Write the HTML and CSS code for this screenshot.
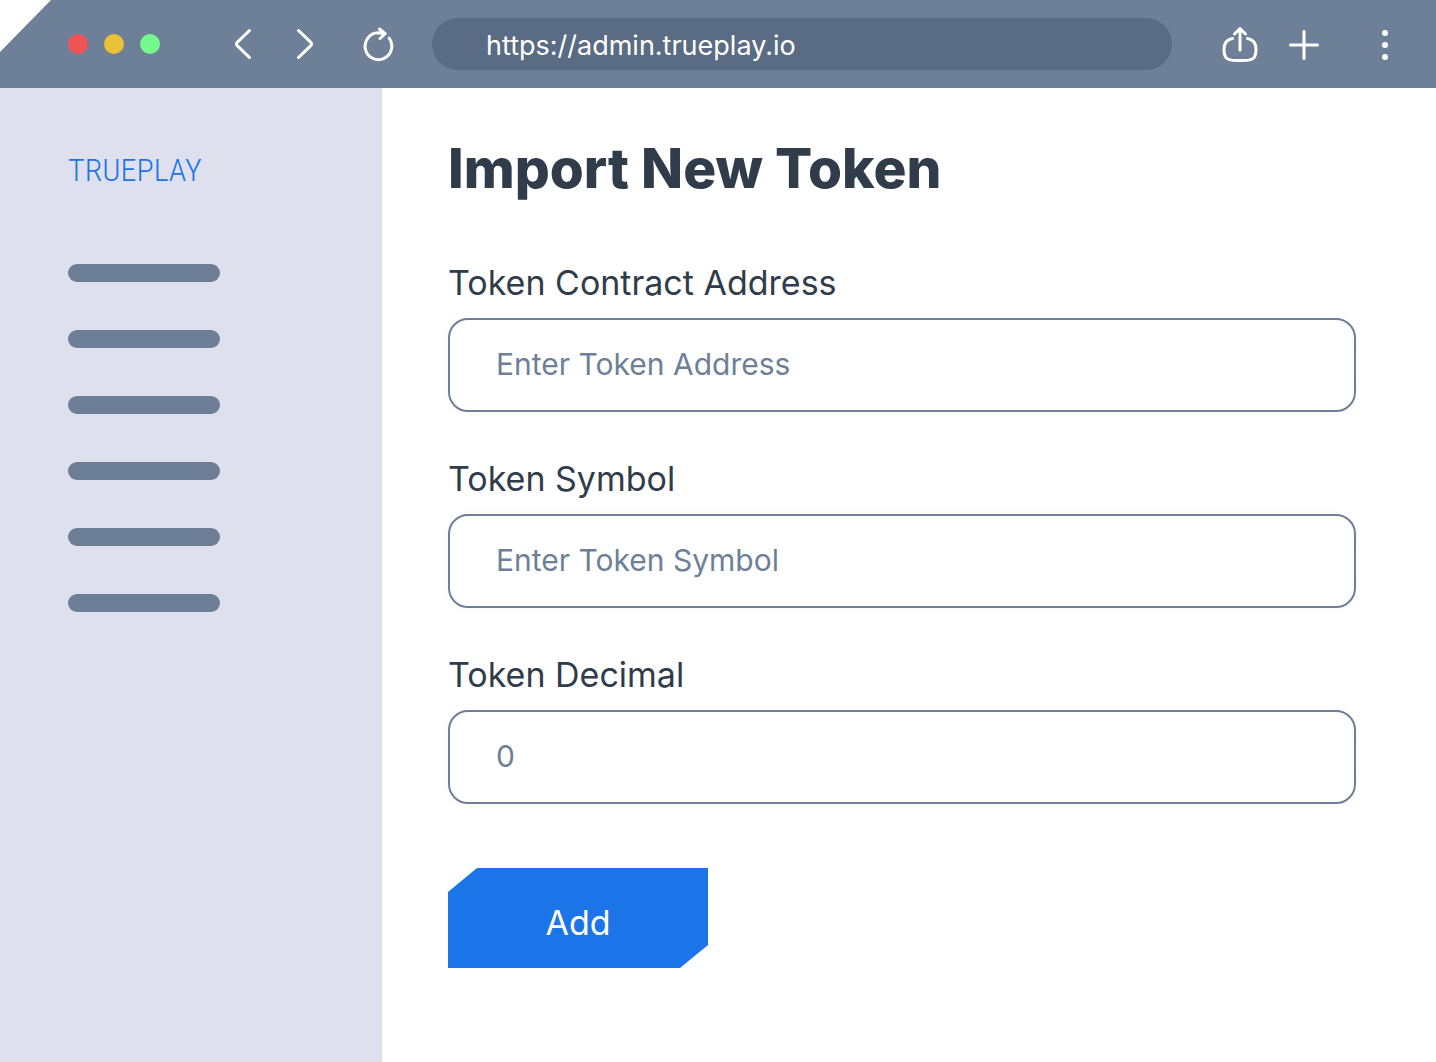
FILE: index.html
```html
<!DOCTYPE html>
<html lang="en">
<head>
    <meta charset="UTF-8">
    <meta name="viewport" content="width=device-width, initial-scale=1.0">
    <title>Import New Token</title>
    <link rel="stylesheet" href="styles.css">
</head>
<body>
    <header class="browser-bar">
        <div class="dots">
            <span class="dot red"></span>
            <span class="dot yellow"></span>
            <span class="dot green"></span>
        </div>
        <div class="nav-buttons">
            <button class="icon-button" type="button" aria-label="Back">
                <svg width="20" height="32" viewBox="0 0 20 32"><path d="M16.500 2.500L4.200 14.400Q2.800 16 4.200 17.600L16.500 29.500"/></svg>
            </button>
            <button class="icon-button" type="button" aria-label="Forward">
                <svg width="20" height="32" viewBox="0 0 20 32"><path d="M3.500 2.500L15.800 14.400Q17.200 16 15.800 17.600L3.500 29.500"/></svg>
            </button>
        </div>
        <button class="icon-button reload" type="button" aria-label="Reload">
            <svg width="32" height="36" viewBox="0 0 32 36"><path d="M27.200 12.200A13.400 13.400 0 1 1 16 6.800L22.500 7.400M17.500 3L23.200 7.700L18 12.500"/></svg>
        </button>
        <input class="url" type="text" value="https://admin.trueplay.io" aria-label="Address">
        <div class="actions">
            <button class="icon-button" type="button" aria-label="Share">
                <svg width="36" height="38" viewBox="0 0 36 38"><path d="M10.500 12.500C4.500 13.500 2 17 2 23.500C2 32.500 5.500 34.500 14 34.500H22C30.500 34.500 34 32.500 34 23.500C34 17 31.500 13.500 25.500 12.500M18 24V3M12.500 8L18 2.500L23.500 8"/></svg>
            </button>
            <button class="icon-button" type="button" aria-label="New tab">
                <svg width="32" height="32" viewBox="0 0 32 32"><path d="M16 2.500V29.500M2.500 16H29.500"/></svg>
            </button>
        </div>
        <button class="icon-button menu" type="button" aria-label="Menu">
            <svg width="8" height="32" viewBox="0 0 8 32"><circle cx="4" cy="4" r="3"/><circle cx="4" cy="16" r="3"/><circle cx="4" cy="28" r="3"/></svg>
        </button>
    </header>

    <div class="page">
        <aside class="sidebar">
            <div class="logo">TRUEPLAY</div>
            <ul class="side-menu">
                <li></li>
                <li></li>
                <li></li>
                <li></li>
                <li></li>
                <li></li>
            </ul>
        </aside>

        <main class="content">
            <h1>Import New Token</h1>
            <form class="token-form">
                <div class="field">
                    <label for="address">Token Contract Address</label>
                    <input id="address" type="text" placeholder="Enter Token Address">
                </div>
                <div class="field">
                    <label for="symbol">Token Symbol</label>
                    <input id="symbol" type="text" placeholder="Enter Token Symbol">
                </div>
                <div class="field">
                    <label for="decimal">Token Decimal</label>
                    <input id="decimal" type="text" inputmode="numeric" placeholder="0">
                </div>
                <button class="add-button" type="button">Add</button>
            </form>
        </main>
    </div>
</body>
</html>
```
FILE: styles.css
```css
* {
    box-sizing: border-box;
}
body {
    display: flex;
    flex-direction: column;
    min-height: 100vh;
    margin: 0;
    background: #fff;
    color: #303c49;
    font-family: Inter, sans-serif;
}

/* browser bar */
.browser-bar {
    display: flex;
    align-items: center;
    height: 88px;
    padding: 0 47px 0 68px;
    background: #6e7f98;
    clip-path: polygon(51px 0, 100% 0, 100% 100%, 0 100%, 0 52px);
}
.dots {
    display: flex;
    gap: 16px;
}
.dot {
    width: 20px;
    height: 20px;
    border-radius: 50%;
}
.red { background: #ef5353; }
.yellow { background: #e9c238; }
.green { background: #75f98c; }
.nav-buttons {
    display: flex;
    gap: 42px;
    margin-left: 73px;
}
.icon-button {
    display: flex;
    padding: 0;
    border: none;
    background: none;
    cursor: pointer;
}
.icon-button svg {
    fill: none;
    stroke: #fff;
    stroke-width: 3;
    stroke-linecap: round;
    stroke-linejoin: round;
}
.reload {
    margin-left: 47px;
}
.url {
    flex: 1;
    min-width: 0;
    height: 52px;
    margin: 0 50px 0 38px;
    padding: 2px 54px 0;
    border: none;
    border-radius: 26px;
    background: #5a6c84;
    color: #fff;
    font: 27px Inter, sans-serif;
}
.actions {
    display: flex;
    align-items: center;
    gap: 30px;
    margin-top: 2px;
}
.menu {
    margin: 2px 0 0 61px;
}
.menu svg {
    fill: #fff;
    stroke: none;
}

/* page */
.page {
    display: flex;
    flex: 1;
}
.sidebar {
    flex: 0 0 382px;
    padding: 56px 68px;
    background: #dfe0ed;
}
.logo {
    height: 52px;
    color: #1b74e8;
    font: 300 32px/52px "Roboto Condensed", Roboto, sans-serif;
}
.side-menu {
    display: flex;
    flex-direction: column;
    gap: 48px;
    margin: 68px 0 0;
    padding: 0;
    list-style: none;
}
.side-menu li {
    width: 152px;
    height: 18px;
    border-radius: 9px;
    background: #6c7f96;
}
.content {
    flex: 1;
    min-width: 0;
    padding: 48px 80px 94px 66px;
}
h1 {
    margin: 0 0 64px;
    font-size: 55px;
    line-height: 64px;
    font-weight: 800;
}
.token-form {
    display: flex;
    flex-direction: column;
    gap: 48px;
}
.field {
    display: flex;
    flex-direction: column;
    gap: 16px;
}
.field label {
    font-size: 34px;
    line-height: 38px;
}
.field input {
    height: 94px;
    padding: 0 46px 2px;
    border: 2px solid #6e7f98;
    border-radius: 20px;
    background: #fff;
    box-shadow: 0 0 20px rgba(0, 0, 0, 0.02);
    color: #303c49;
    font: 30px Inter, sans-serif;
}
.field input::placeholder {
    color: #6e7f98;
}
.add-button {
    width: 260px;
    height: 100px;
    margin-top: 16px;
    padding: 8px 0 0;
    border: none;
    background: #1b74e8;
    clip-path: polygon(29px 0, 100% 0, 100% 77%, 232px 100%, 0 100%, 0 24px);
    color: #fff;
    font: 34px Inter, sans-serif;
    cursor: pointer;
}
```
